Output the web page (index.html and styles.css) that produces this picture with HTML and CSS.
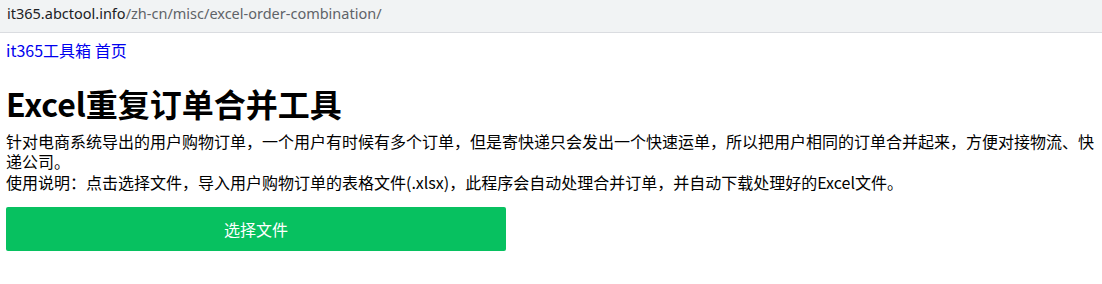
FILE: index.html
```html
<!DOCTYPE html>
<html lang="zh-CN">
<head>
    <meta charset="UTF-8">
    <meta name="viewport" content="width=device-width, initial-scale=1.0">
    <title>Excel重复订单合并工具</title>
    <link rel="stylesheet" href="styles.css">
</head>
<body>
    <div class="address-bar">
        <span class="host">it365.abctool.info</span><span class="path">/zh-cn/misc/excel-order-combination/</span>
    </div>
    <div class="page">
        <div class="nav">
            <a href="#">it365工具箱</a> <a href="#">首页</a>
        </div>
        <h1>Excel重复订单合并工具</h1>
        <div class="desc">
            <p>针对电商系统导出的用户购物订单，一个用户有时候有多个订单，但是寄快递只会发出一个快速运单，所以把用户相同的订单合并起来，方便对接物流、快递公司。</p>
            <p class="usage">使用说明：点击选择文件，导入用户购物订单的表格文件(.xlsx)，此程序会自动处理合并订单，并自动下载处理好的Excel文件。</p>
        </div>
        <button class="pick-file" type="button">选择文件</button>
    </div>
</body>
</html>
```

FILE: styles.css
```css
body {
    margin: 0;
    font-family: "Noto Sans CJK SC", "Noto Sans", sans-serif;
    font-size: 16px;
    color: #000000;
    background: #ffffff;
    overflow: hidden;
}

.address-bar {
    height: 32px;
    line-height: 26px;
    padding-left: 7px;
    background: #f1f3f4;
    border-bottom: 1px solid #dadce0;
    font-family: "Noto Sans", "Open Sans", sans-serif;
    font-size: 14.5px;
}

.address-bar .host {
    color: #202124;
}

.address-bar .path {
    color: #5f6368;
}

.page {
    margin: 0 6px;
}

.nav {
    padding-top: 7px;
    line-height: 20px;
}

.nav a {
    color: #0000ee;
    text-decoration: none;
}

h1 {
    margin: 23px 0 0;
    font-size: 32px;
    line-height: 40px;
    font-weight: bold;
}

.desc {
    margin-top: 8px;
    line-height: 20px;
}

.desc p {
    margin: 0;
}

.desc .usage {
    margin-top: 1px;
}

.pick-file {
    display: block;
    width: 500px;
    height: 44px;
    margin-top: 15px;
    border: none;
    border-radius: 2px;
    background-color: #07c160;
    color: #ffffff;
    font-family: inherit;
    font-size: 16px;
    cursor: pointer;
}
```
